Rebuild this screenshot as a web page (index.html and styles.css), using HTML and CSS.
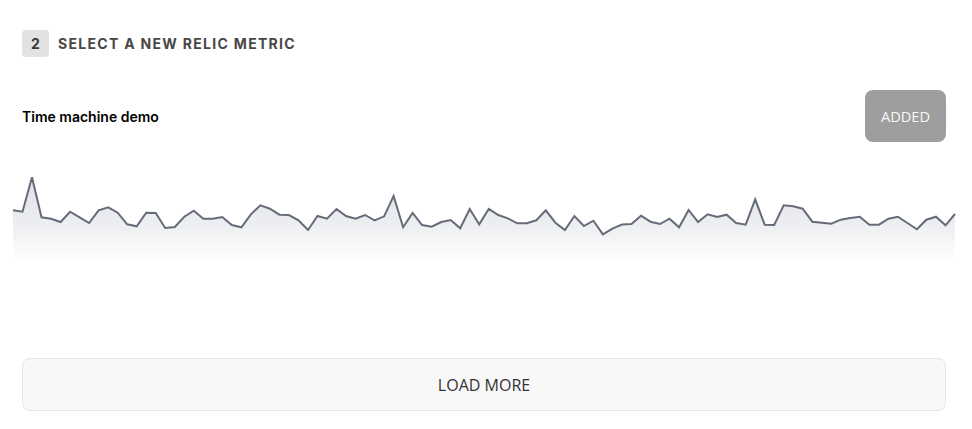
FILE: index.html
```html
<!DOCTYPE html>
<html>
<head>
<meta charset="utf-8">
<link rel="stylesheet" href="styles.css">
</head>
<body>
<div class="page">
  <div class="step">
    <span class="step-num">2</span>
    <span class="step-title">SELECT A NEW RELIC METRIC</span>
  </div>
  <div class="metric-row">
    <span class="metric-name">Time machine demo</span>
    <button class="added-btn">ADDED</button>
  </div>
  <div class="chart">
    <svg class="chart-svg" viewBox="0 0 942 100" width="942" height="100" preserveAspectRatio="none">
      <defs>
        <linearGradient id="fillGrad" x1="0" y1="0" x2="0" y2="1">
          <stop offset="0" stop-color="#dfe1e6"/>
          <stop offset="0.5" stop-color="#edeef1"/>
          <stop offset="0.92" stop-color="#ffffff"/>
        </linearGradient>
      </defs>
      <polygon class="area" fill="url(#fillGrad)" points="0,40.3 9.5,41.7 19,7.3 28.5,47.3 38.1,48.7 47.6,52 57.1,41.7 66.6,47.3 76.1,53 85.6,40.3 95.2,37.3 104.7,42.7 114.2,54.3 123.7,56.3 133.2,42.7 142.7,43 152.2,58 161.8,57 171.3,46.7 180.8,40.7 190.3,48.7 199.8,48.7 209.3,47 218.8,55 228.4,57.3 237.9,44.3 247.4,35.3 256.9,38.7 266.4,44.7 275.9,45 285.5,50.3 295,60 304.5,46 314,48.7 323.5,39 333,46 342.5,48.7 352.1,45 361.6,50.3 371.1,46.3 380.6,26 390.1,57.3 399.6,43 409.1,55 418.7,56.7 428.2,52 437.7,50 447.2,58.3 456.7,39 466.2,54.3 475.8,39 485.3,45 494.8,48.3 504.3,53.3 513.8,53.3 523.3,50.3 532.8,40.3 542.4,52.7 551.9,60 561.4,46 570.9,56 580.4,50.7 589.9,64.3 599.4,58.7 609,54.5 618.5,54 628,45.7 637.5,51.7 647,54 656.5,48.7 666.1,57.3 675.6,40 685.1,52 694.6,44.3 704.1,47 713.6,44.7 723.1,53 732.7,54.7 742.2,29.3 751.7,54.7 761.2,55 770.7,35.3 780.2,36.2 789.7,38.7 799.3,51.7 808.8,52.7 818.3,53.7 827.8,49.7 837.3,48 846.8,46.7 856.4,54.7 865.9,54.7 875.4,48.7 884.9,46.7 894.4,53 903.9,59.3 913.4,49.7 923,46.7 932.5,55.3 942,44 942,100 0,100"/>
      <polyline class="line" points="0,40.3 9.5,41.7 19,7.3 28.5,47.3 38.1,48.7 47.6,52 57.1,41.7 66.6,47.3 76.1,53 85.6,40.3 95.2,37.3 104.7,42.7 114.2,54.3 123.7,56.3 133.2,42.7 142.7,43 152.2,58 161.8,57 171.3,46.7 180.8,40.7 190.3,48.7 199.8,48.7 209.3,47 218.8,55 228.4,57.3 237.9,44.3 247.4,35.3 256.9,38.7 266.4,44.7 275.9,45 285.5,50.3 295,60 304.5,46 314,48.7 323.5,39 333,46 342.5,48.7 352.1,45 361.6,50.3 371.1,46.3 380.6,26 390.1,57.3 399.6,43 409.1,55 418.7,56.7 428.2,52 437.7,50 447.2,58.3 456.7,39 466.2,54.3 475.8,39 485.3,45 494.8,48.3 504.3,53.3 513.8,53.3 523.3,50.3 532.8,40.3 542.4,52.7 551.9,60 561.4,46 570.9,56 580.4,50.7 589.9,64.3 599.4,58.7 609,54.5 618.5,54 628,45.7 637.5,51.7 647,54 656.5,48.7 666.1,57.3 675.6,40 685.1,52 694.6,44.3 704.1,47 713.6,44.7 723.1,53 732.7,54.7 742.2,29.3 751.7,54.7 761.2,55 770.7,35.3 780.2,36.2 789.7,38.7 799.3,51.7 808.8,52.7 818.3,53.7 827.8,49.7 837.3,48 846.8,46.7 856.4,54.7 865.9,54.7 875.4,48.7 884.9,46.7 894.4,53 903.9,59.3 913.4,49.7 923,46.7 932.5,55.3 942,44"/>
    </svg>
  </div>
  <button class="load-more">LOAD MORE</button>
</div>
</body>
</html>
```

FILE: styles.css
```css
* { box-sizing: border-box; }
html, body { margin: 0; padding: 0; background: #ffffff; }
body { font-family: Inter, "Noto Sans", sans-serif; }

.page {
  width: 972px;
  padding: 30px 26px 0 22px;
  display: flex;
  flex-direction: column;
}

.step {
  display: flex;
  align-items: center;
  height: 27px;
}
.step-num {
  width: 27px;
  height: 27px;
  border-radius: 4px;
  background: #e2e2e2;
  color: #3a3a3a;
  font-weight: 700;
  font-size: 14px;
  display: flex;
  align-items: center;
  justify-content: center;
}
.step-title {
  margin-left: 9px;
  font-size: 14px;
  font-weight: 700;
  letter-spacing: 1.3px;
  color: #4a4644;
}

.metric-row {
  margin-top: 33px;
  display: flex;
  align-items: center;
  justify-content: space-between;
  height: 52px;
}
.metric-name {
  font-size: 14px;
  font-weight: 600;
  color: #000000;
}
.added-btn {
  width: 81px;
  height: 52px;
  border: none;
  border-radius: 8px;
  background: #9e9e9e;
  color: #f7f7f7;
  font-family: "Open Sans", sans-serif;
  font-size: 14.6px;
  font-weight: 400;
  padding: 0;
}

.chart {
  margin: 28px -9px 0 -9px;
  height: 100px;
}
.chart-svg {
  display: block;
  overflow: visible;
}
.line {
  fill: none;
  stroke: #666b7a;
  stroke-width: 2;
  stroke-linejoin: miter;
}

.load-more {
  margin-top: 88px;
  height: 53px;
  width: 100%;
  background: #f8f8f8;
  border: 1px solid #e6e6e6;
  border-radius: 8px;
  font-family: "Open Sans", sans-serif;
  font-size: 16px;
  color: #333333;
  padding: 0;
}
```
